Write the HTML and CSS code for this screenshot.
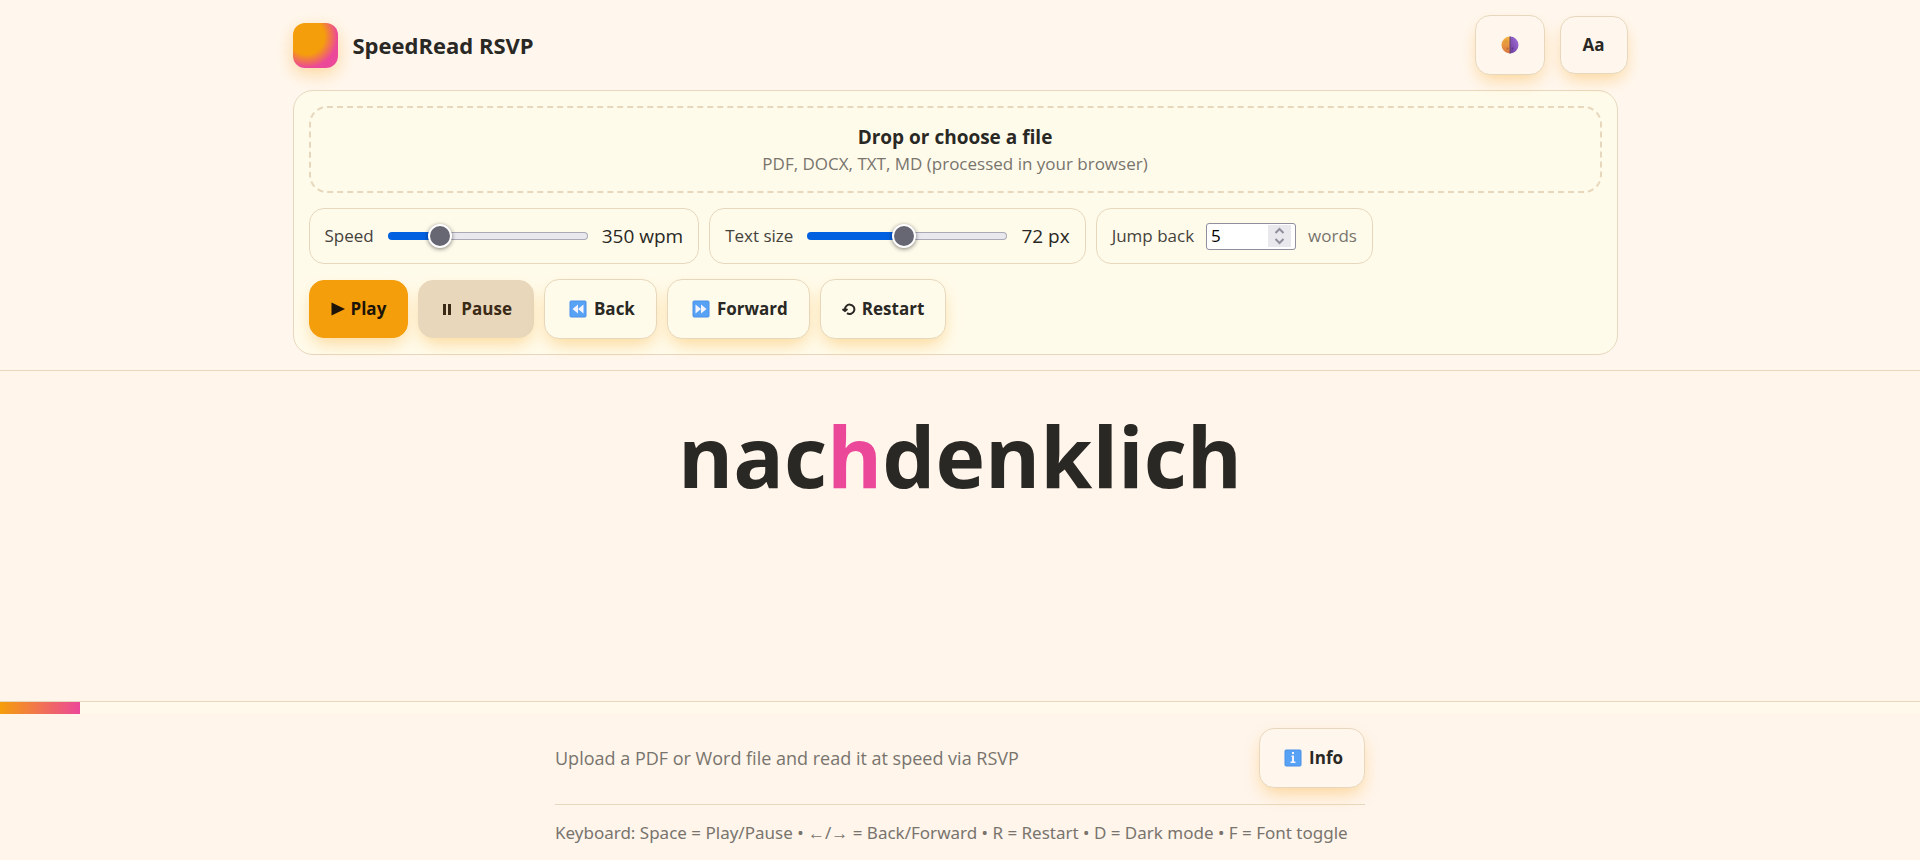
FILE: index.html
```html
<!DOCTYPE html>
<html lang="en">
<head>
    <meta charset="UTF-8">
    <meta name="viewport" content="width=device-width, initial-scale=1.0">
    <title>SpeedRead RSVP</title>
    <link rel="stylesheet" href="styles.css">
</head>
<body>
    <header class="topbar">
        <div class="wrap">
            <div class="brand-row">
                <div class="logo"></div>
                <h1>SpeedRead RSVP</h1>
                <div class="toggles">
                    <button class="btn framed icon-only" id="theme-toggle" type="button" aria-label="Dark mode">
                        <svg class="emoji" viewBox="0 0 18 18" aria-hidden="true">
                            <defs>
                                <linearGradient id="sun" x1="0" y1="0" x2="0" y2="1">
                                    <stop offset="0" stop-color="#f5b544"/>
                                    <stop offset="1" stop-color="#d9753f"/>
                                </linearGradient>
                                <linearGradient id="moon" x1="1" y1="0" x2="0" y2="1">
                                    <stop offset="0" stop-color="#a673dc"/>
                                    <stop offset="1" stop-color="#6a3c9c"/>
                                </linearGradient>
                            </defs>
                            <path fill="url(#sun)" d="M9 0.5a8.5 8.5 0 0 0 0 17z"/>
                            <path fill="url(#moon)" d="M9 0.5a8.5 8.5 0 0 1 0 17z"/>
                            <circle cx="5" cy="6" r="2" fill="#e39b3a"/>
                            <circle cx="6.5" cy="12.5" r="1" fill="#b9683a"/>
                            <circle cx="11.5" cy="12.5" r="1" fill="#5d3590"/>
                            <path stroke="#6b4668" stroke-width="1" d="M9 0.5v17"/>
                        </svg>
                    </button>
                    <button class="btn font-toggle" id="font-toggle" type="button">Aa</button>
                </div>
            </div>

            <section class="panel">
                <label class="dropzone" tabindex="0">
                    <strong>Drop or choose a file</strong>
                    <span class="muted">PDF, DOCX, TXT, MD (processed in your browser)</span>
                    <input type="file" accept=".pdf,.docx,.txt,.md" hidden>
                </label>

                <div class="row">
                    <div class="field">
                        <label for="speed">Speed</label>
                        <input class="speed" id="speed" type="range" min="100" max="1200" value="350">
                        <output for="speed">350 wpm</output>
                    </div>
                    <div class="field">
                        <label for="size">Text size</label>
                        <input class="size" id="size" type="range" min="24" max="124" value="72">
                        <output for="size">72 px</output>
                    </div>
                    <div class="field jump-field">
                        <label for="jump">Jump back</label>
                        <div class="number">
                            <input id="jump" type="number" min="1" max="50" value="5">
                            <svg viewBox="0 0 23 22" aria-hidden="true">
                                <path d="M7.5 8l4-4l4 4M7.5 14l4 4l4-4"/>
                            </svg>
                        </div>
                        <span class="muted">words</span>
                    </div>
                </div>

                <div class="row">
                    <button class="btn play" type="button">
                        <svg class="glyph-play" viewBox="0 0 14 14" aria-hidden="true"><path d="M0.5 0.5L14 7L0.5 13.5z"/></svg>
                        Play
                    </button>
                    <button class="btn pause" type="button">
                        <svg class="glyph-pause" viewBox="0 0 12 12" aria-hidden="true"><path d="M2 1h3v11h-3zM7 1h3v11h-3z"/></svg>
                        Pause
                    </button>
                    <button class="btn framed" type="button">
                        <svg class="emoji" viewBox="0 0 18 18" aria-hidden="true">
                            <rect class="tile" x="1" y="1" width="16" height="16" rx="1"/>
                            <path class="mark" d="M9 4.5v9L3.5 9zM14.5 4.5v9L9 9z"/>
                        </svg>
                        Back
                    </button>
                    <button class="btn framed" type="button">
                        <svg class="emoji" viewBox="0 0 18 18" aria-hidden="true">
                            <rect class="tile" x="1" y="1" width="16" height="16" rx="1"/>
                            <path class="mark" d="M3.5 4.5v9L9 9zM9 4.5v9L14.5 9z"/>
                        </svg>
                        Forward
                    </button>
                    <button class="btn framed restart" type="button">
                        <svg class="glyph-restart" viewBox="0 0 14 14" aria-hidden="true">
                            <path d="M3 8a4.7 4.7 0 1 1 2 3.2M0.5 7L3 9L5.5 7"/>
                        </svg>
                        Restart
                    </button>
                </div>
            </section>
        </div>
    </header>

    <main class="stage">
        <div class="word">nac<span class="pivot">h</span>denklich</div>
    </main>

    <footer class="footer">
        <div class="progress" role="progressbar" aria-label="Progress"><div class="bar"></div></div>
        <div class="foot">
            <div class="foot-row">
                <p>Upload a PDF or Word file and read it at speed via RSVP</p>
                <button class="btn framed" type="button">
                    <svg class="emoji" viewBox="0 0 18 18" aria-hidden="true">
                        <rect class="tile" x="1" y="1" width="16" height="16" rx="1"/>
                        <path class="mark" d="M8 3h2v2h-2zM7.5 6.5h2.5v6h1.5v1.5h-5v-1.5h1.5v-4.5h-0.5z"/>
                    </svg>
                    Info
                </button>
            </div>
            <p class="keys">Keyboard: Space = Play/Pause • ←/→ = Back/Forward • R = Restart • D = Dark mode • F = Font toggle</p>
        </div>
    </footer>
</body>
</html>
```
FILE: styles.css
```css
:root {
    --bg: #fff5eb;
    --panel: #fffbeb;
    --text: #292824;
    --muted: #78746d;
    --line: #e7d8bd;
    --accent: #f59e0b;
    --pink: #ec4899;
}
* {
    box-sizing: border-box;
}
body {
    margin: 0;
    min-height: 100vh;
    display: flex;
    flex-direction: column;
    background: var(--bg);
    color: var(--text);
    font-family: "Open Sans", "Noto Sans", sans-serif;
    font-size: 18px;
    line-height: 24px;
}
h1, p {
    margin: 0;
}
.topbar {
    background: #fff7ee;
    border-bottom: 1px solid var(--line);
    padding: 15px 16px;
}
.wrap {
    max-width: 1335px;
    margin: 0 auto;
}
.brand-row {
    display: flex;
    align-items: center;
    gap: 15px;
    min-height: 60px;
    margin-bottom: 15px;
}
.logo {
    width: 45px;
    height: 45px;
    border-radius: 12px;
    background: radial-gradient(circle at 30% 30%, var(--accent) 0 40%, var(--pink) 70%);
    box-shadow: 0 6px 18px rgba(245, 158, 11, 0.35);
}
h1 {
    font-size: 22px;
    line-height: 30px;
}
.toggles {
    display: flex;
    align-items: center;
    gap: 15px;
    margin-left: auto;
}
.btn {
    display: inline-flex;
    align-items: center;
    gap: 6px;
    min-height: 58px;
    padding: 0 21px;
    border: 1px solid var(--line);
    border-radius: 15px;
    background: #fff7ee;
    color: var(--text);
    font: bold 17px/22px "Open Sans", "Noto Sans", sans-serif;
    box-shadow: 0 8px 18px -4px rgba(245, 158, 11, 0.4);
    cursor: pointer;
}
.font-toggle {
    padding: 0 22px;
}
.framed {
    gap: 7px;
    min-height: 60px;
    padding: 0 21px 0 24px;
}
.icon-only {
    padding: 0 25px;
}
.emoji {
    width: 18px;
    height: 18px;
}
.tile {
    fill: #58a2f5;
    stroke: #4a90e8;
}
.mark {
    fill: #f4f4ff;
}
.panel {
    display: flex;
    flex-direction: column;
    gap: 15px;
    margin-right: 10px;
    padding: 15px;
    background: var(--panel);
    border: 1px solid var(--line);
    border-radius: 20px;
}
.dropzone {
    display: flex;
    flex-direction: column;
    align-items: center;
    padding: 15px 18px 14px;
    border: 2px dashed var(--line);
    border-radius: 18px;
    cursor: pointer;
}
.dropzone strong {
    font-size: 19px;
    line-height: 28px;
}
.dropzone .muted {
    line-height: 26px;
}
.muted {
    color: var(--muted);
    font-size: 17px;
}
.row {
    display: flex;
    flex-wrap: wrap;
    align-items: center;
    gap: 10px;
}
.field {
    display: flex;
    align-items: center;
    gap: 14px;
    min-height: 56px;
    padding: 0 15px;
    border: 1px solid var(--line);
    border-radius: 15px;
}
.field label {
    font-size: 17px;
    color: #45423c;
}
.field output {
    font-size: 19px;
}
.jump-field {
    gap: 12px;
}
input[type="range"] {
    appearance: none;
    width: 200px;
    height: 26px;
    margin: 0;
    background: transparent;
}
/* the filled part covers the track's outline */
.field .speed::-webkit-slider-runnable-track {
    height: 8px;
    border: 1px solid transparent;
    border-radius: 4px;
    background:
        linear-gradient(90deg, #0060df 25%, transparent 25%) border-box,
        linear-gradient(#e9e9ed, #e9e9ed) padding-box,
        linear-gradient(#a9a9b8, #a9a9b8) border-box;
}
.field .size::-webkit-slider-runnable-track {
    height: 8px;
    border: 1px solid transparent;
    border-radius: 4px;
    background:
        linear-gradient(90deg, #0060df 48%, transparent 48%) border-box,
        linear-gradient(#e9e9ed, #e9e9ed) padding-box,
        linear-gradient(#a9a9b8, #a9a9b8) border-box;
}
input[type="range"]::-webkit-slider-thumb {
    appearance: none;
    width: 24px;
    height: 24px;
    margin-top: -9px;
    border: 2px solid #fff;
    border-radius: 50%;
    background: #676774;
    box-shadow: 0 1px 4px rgba(0, 0, 0, 0.5);
}
.number {
    display: flex;
    align-items: center;
    width: 90px;
    height: 27px;
    padding-right: 4px;
    border: 1px solid #8f8f9d;
    border-radius: 3px;
    background: #fff;
}
.number input {
    appearance: textfield;
    flex: 1;
    min-width: 0;
    padding: 0 4px;
    border: 0;
    background: transparent;
    color: #000;
    font: 17px/22px "Open Sans", sans-serif;
}
.number input::-webkit-inner-spin-button {
    display: none;
}
.number svg {
    width: 23px;
    height: 22px;
    background: #e9e9ed;
    fill: none;
    stroke: #8f8f9d;
    stroke-width: 2;
}
.play {
    background: var(--accent);
    border-color: var(--accent);
    color: #1c1408;
}
.pause {
    gap: 8px;
    padding-left: 22px;
    background: #e8d7bb;
    border-color: #e8d7bb;
    color: #3a2a16;
}
.panel .framed {
    background: var(--panel);
}
.glyph-play {
    width: 14px;
    height: 14px;
    fill: currentColor;
}
.glyph-pause {
    width: 12px;
    height: 12px;
    fill: currentColor;
}
.restart {
    gap: 6px;
    padding: 0 21px;
}
.glyph-restart {
    width: 14px;
    height: 14px;
    fill: none;
    stroke: currentColor;
    stroke-width: 2;
}
.stage {
    flex: 1;
    display: flex;
    justify-content: center;
    padding: 25px 16px;
}
.word {
    font-size: 84px;
    line-height: 120px;
    font-weight: bold;
}
.pivot {
    color: var(--pink);
}
.footer {
    border-top: 1px solid var(--line);
}
.progress {
    height: 12px;
    background: #fff9eb;
}
.bar {
    width: 80px;
    height: 100%;
    background: linear-gradient(90deg, var(--accent), var(--pink));
}
.foot {
    max-width: 810px;
    margin: 0 auto;
    padding: 14px 0 15px;
    color: var(--muted);
}
.foot-row {
    display: flex;
    align-items: center;
    justify-content: space-between;
    padding-bottom: 16px;
    border-bottom: 1px solid var(--line);
}
.keys {
    padding-top: 16px;
    font-family: "Noto Sans", sans-serif;
    font-size: 17px;
}
```
